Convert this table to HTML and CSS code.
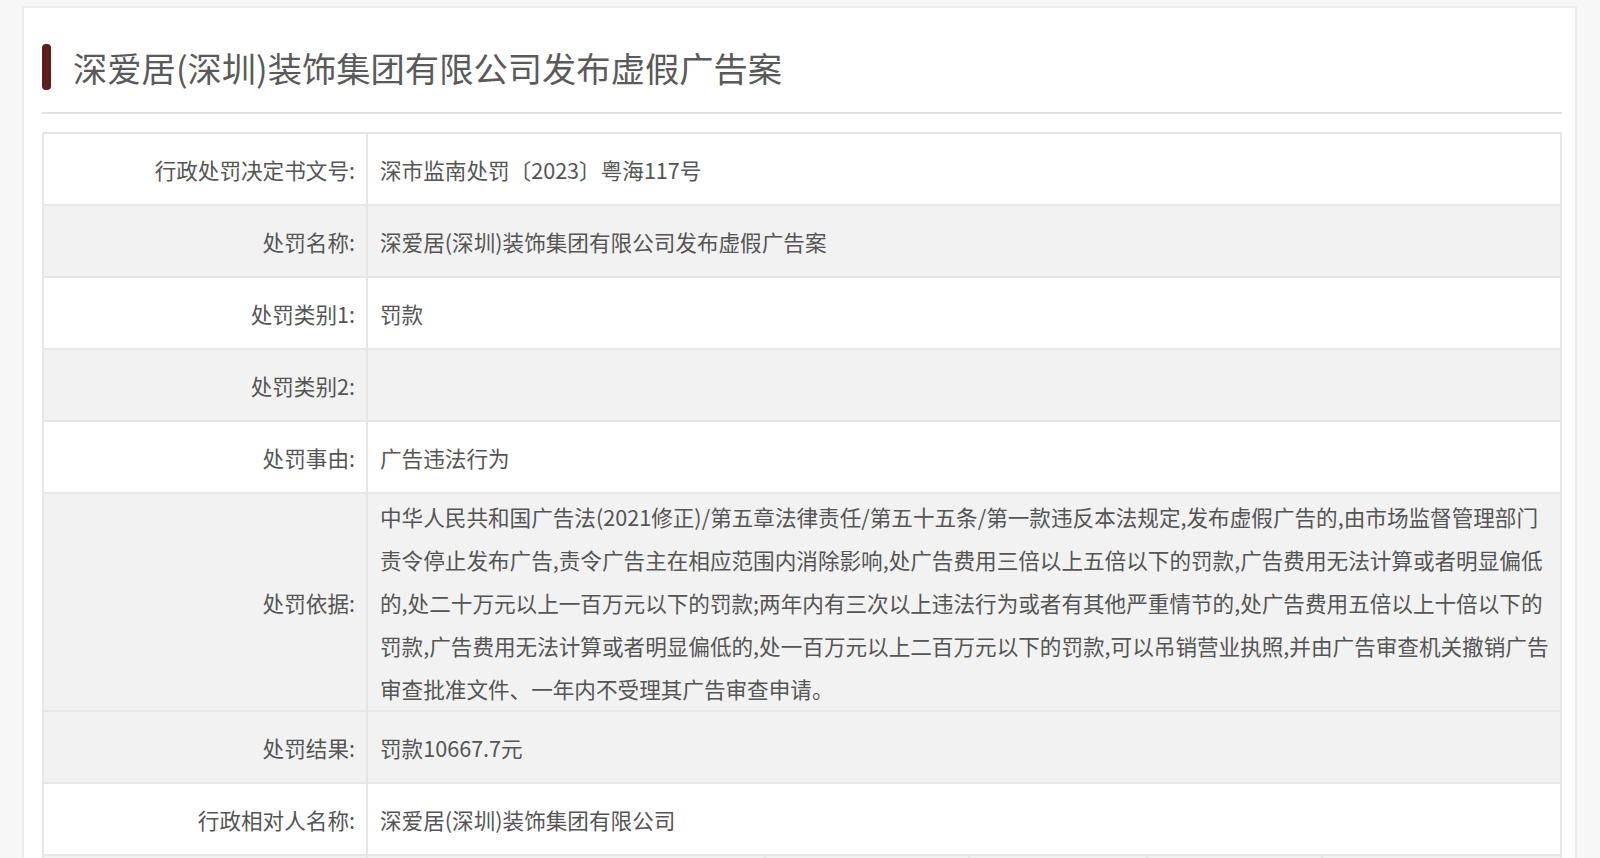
FILE: index.html
```html
<!DOCTYPE html>
<html lang="zh-CN">
<head>
<meta charset="utf-8">
<title>深爱居(深圳)装饰集团有限公司发布虚假广告案</title>
<link rel="stylesheet" href="styles.css">
</head>
<body>
<div class="page">
  <div class="panel">
    <div class="title-bar">
      <span class="mark"></span>
      <h1 class="title">深爱居(深圳)装饰集团有限公司发布虚假广告案</h1>
    </div>
    <table class="info">
      <tbody>
        <tr>
          <td class="label">行政处罚决定书文号:</td>
          <td class="value">深市监南处罚〔2023〕粤海117号</td>
        </tr>
        <tr class="alt">
          <td class="label">处罚名称:</td>
          <td class="value">深爱居(深圳)装饰集团有限公司发布虚假广告案</td>
        </tr>
        <tr>
          <td class="label">处罚类别1:</td>
          <td class="value">罚款</td>
        </tr>
        <tr class="alt">
          <td class="label">处罚类别2:</td>
          <td class="value"></td>
        </tr>
        <tr>
          <td class="label">处罚事由:</td>
          <td class="value">广告违法行为</td>
        </tr>
        <tr class="alt tall">
          <td class="label">处罚依据:</td>
          <td class="value">中华人民共和国广告法(2021修正)/第五章法律责任/第五十五条/第一款违反本法规定,发布虚假广告的,由市场监督管理部门<br>责令停止发布广告,责令广告主在相应范围内消除影响,处广告费用三倍以上五倍以下的罚款,广告费用无法计算或者明显偏低<br>的,处二十万元以上一百万元以下的罚款;两年内有三次以上违法行为或者有其他严重情节的,处广告费用五倍以上十倍以下的<br>罚款,广告费用无法计算或者明显偏低的,处一百万元以上二百万元以下的罚款,可以吊销营业执照,并由广告审查机关撤销广告<br>审查批准文件、一年内不受理其广告审查申请。</td>
        </tr>
        <tr class="alt">
          <td class="label">处罚结果:</td>
          <td class="value">罚款10667.7元</td>
        </tr>
        <tr>
          <td class="label">行政相对人名称:</td>
          <td class="value">深爱居(深圳)装饰集团有限公司</td>
        </tr>
      </tbody>
    </table>
    <table class="info multi">
      <tbody>
        <tr class="alt">
          <td class="c1">&nbsp;</td>
          <td class="c2">&nbsp;</td>
          <td class="c3">&nbsp;</td>
          <td class="c4">&nbsp;</td>
          <td class="c5">&nbsp;</td>
          <td class="c6">&nbsp;</td>
        </tr>
      </tbody>
    </table>
  </div>
</div>
</body>
</html>
```

FILE: styles.css
```css
html, body {
  margin: 0;
  padding: 0;
}

body {
  background: #f7f7f7;
  font-family: "Noto Sans CJK SC", "Microsoft YaHei", sans-serif;
  color: #555;
  overflow: hidden;
}

.page {
  padding: 6px 23px 0 22px;
}

.panel {
  background: #fff;
  border: 2px solid #ebebeb;
  padding: 0 13px 40px 18px;
}

.title-bar {
  display: flex;
  align-items: center;
  padding: 36px 0 22px 0;
  border-bottom: 2px solid #e2e2e2;
}

.mark {
  display: block;
  width: 9px;
  height: 46px;
  border-radius: 4px;
  background: #5e1c1c;
  margin-right: 22px;
  flex: none;
}

.title {
  margin: 0;
  font-size: 34.3px;
  line-height: 46px;
  font-weight: 400;
  color: #5a5a5a;
}

.info {
  width: 100%;
  table-layout: fixed;
  border-collapse: collapse;
  font-size: 21.6px;
  line-height: 43px;
  color: #555;
}

.info:first-of-type {
  margin-top: 18px;
}

.info td {
  box-sizing: border-box;
  border: 2px solid #e6e6e6;
  padding: 14px 4px 13px 12px;
  vertical-align: middle;
  white-space: nowrap;
}

.info tr.alt td {
  background: #f2f2f2;
}

.info td.label {
  width: 324px;
  text-align: right;
  padding-right: 11px;
  padding-left: 0;
}

.info tr.tall td {
  padding-top: 1px;
  padding-bottom: 0;
}

.multi td {
  border-top: none;
}

.multi .c1 { width: 324px; }
.multi .c2 { width: 398px; }
.multi .c3 { width: 204px; }
.multi .c4 { width: 178px; }
.multi .c5 { width: 175px; }
```
